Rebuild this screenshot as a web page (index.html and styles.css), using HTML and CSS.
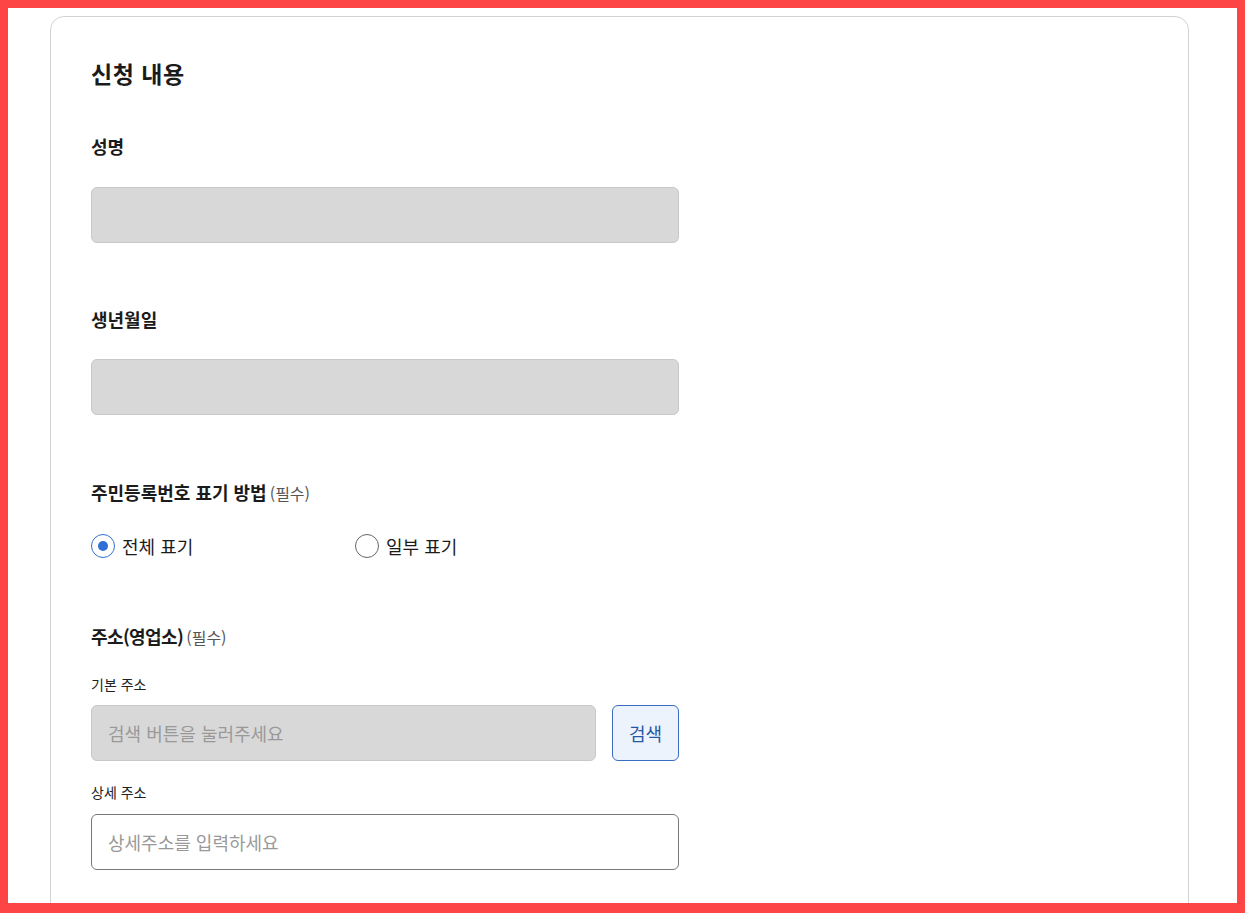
FILE: index.html
```html
<!DOCTYPE html>
<html lang="ko">
<head>
<meta charset="utf-8">
<title>신청 내용</title>
<link rel="stylesheet" href="styles.css">
</head>
<body>
<div class="frame">
  <section class="card">
    <h2 class="card-title">신청 내용</h2>

    <div class="field field-first">
      <div class="label">성명</div>
      <div class="input input-disabled"></div>
    </div>

    <div class="field">
      <div class="label">생년월일</div>
      <div class="input input-disabled"></div>
    </div>

    <div class="field field-radio">
      <div class="label">주민등록번호 표기 방법 <span class="req">(필수)</span></div>
      <div class="radios">
        <label class="radio"><span class="circle checked"></span><span>전체 표기</span></label>
        <label class="radio"><span class="circle"></span><span>일부 표기</span></label>
      </div>
    </div>

    <div class="field field-addr">
      <div class="label"><span class="tight">주소(영업소)</span> <span class="req">(필수)</span></div>
      <div class="sublabel sub-first">기본 주소</div>
      <div class="addr-row">
        <div class="input input-disabled addr-input"><span class="ph">검색 버튼을 눌러주세요</span></div>
        <button class="btn-search" type="button">검색</button>
      </div>
      <div class="sublabel">상세 주소</div>
      <div class="input input-text"><span class="ph">상세주소를 입력하세요</span></div>
    </div>
  </section>
</div>
</body>
</html>
```
FILE: styles.css
```css
* { box-sizing: border-box; }
html, body {
  margin: 0;
  padding: 0;
  height: 100%;
}
body {
  font-family: "Noto Sans CJK KR", "Noto Sans", sans-serif;
  color: #1b1b1b;
  background: #ffffff;
}
.frame {
  height: 100vh;
  overflow: hidden;
  border-style: solid;
  border-color: #fd4545;
  border-width: 8px 8px 10px 8px;
  padding: 8px 48px 0 42px;
  background: #ffffff;
}
.card {
  border: 1px solid #d2d2d2;
  border-radius: 14px;
  padding: 40px 40px 60px 40px;
  min-height: 1000px;
}
.card-title {
  margin: 0 0 45px 0;
  font-size: 23px;
  line-height: 32px;
  font-weight: 700;
  letter-spacing: 0.5px;
  color: #1b1b1b;
}
.field {
  width: 588px;
  margin-bottom: 65px;
}
.field-first {
  margin-bottom: 64px;
}
.field-first .label {
  margin-bottom: 29px;
}
.label {
  font-size: 18px;
  line-height: 24px;
  font-weight: 700;
  margin-bottom: 28px;
  color: #1b1b1b;
}
.tight {
  letter-spacing: -0.6px;
}
.req {
  font-size: 16px;
  font-weight: 400;
  color: #555555;
  margin-left: -2px;
}
.input {
  height: 56px;
  border-radius: 6px;
  display: flex;
  align-items: center;
  padding: 0 16px;
  font-size: 18px;
}
.input-disabled {
  background: #d8d8d8;
  border: 1px solid #c8c8c8;
}
.input-text {
  background: #ffffff;
  border: 1px solid #777777;
}
.ph {
  color: #999999;
}
.field-radio {
  margin-bottom: 66px;
}
.field-radio .label,
.field-addr .label {
  margin-bottom: 0;
}
.radios {
  display: flex;
  margin-top: 29px;
}
.radio {
  width: 264px;
  display: flex;
  align-items: center;
  gap: 7px;
  font-size: 18px;
  line-height: 24px;
  color: #1b1b1b;
}
.circle {
  width: 24px;
  height: 24px;
  border-radius: 50%;
  border: 1.5px solid #666666;
  background: #fff;
  display: flex;
  align-items: center;
  justify-content: center;
  flex: none;
}
.circle.checked {
  border-color: #2f6fd6;
}
.circle.checked::after {
  content: "";
  width: 10px;
  height: 10px;
  border-radius: 50%;
  background: #2f6fd6;
}
.sublabel {
  font-size: 14px;
  line-height: 20px;
  color: #222222;
  margin: 21px 0 12px 0;
}
.sub-first {
  margin-top: 25px;
  margin-bottom: 11px;
}
.addr-row {
  display: flex;
  gap: 16px;
}
.addr-input {
  flex: 1;
}
.btn-search {
  width: 67px;
  height: 56px;
  border: 1px solid #3a6cc0;
  border-radius: 6px;
  background: #edf3fc;
  color: #2557a8;
  font-family: inherit;
  font-size: 18px;
  padding: 0;
  cursor: pointer;
}
```
